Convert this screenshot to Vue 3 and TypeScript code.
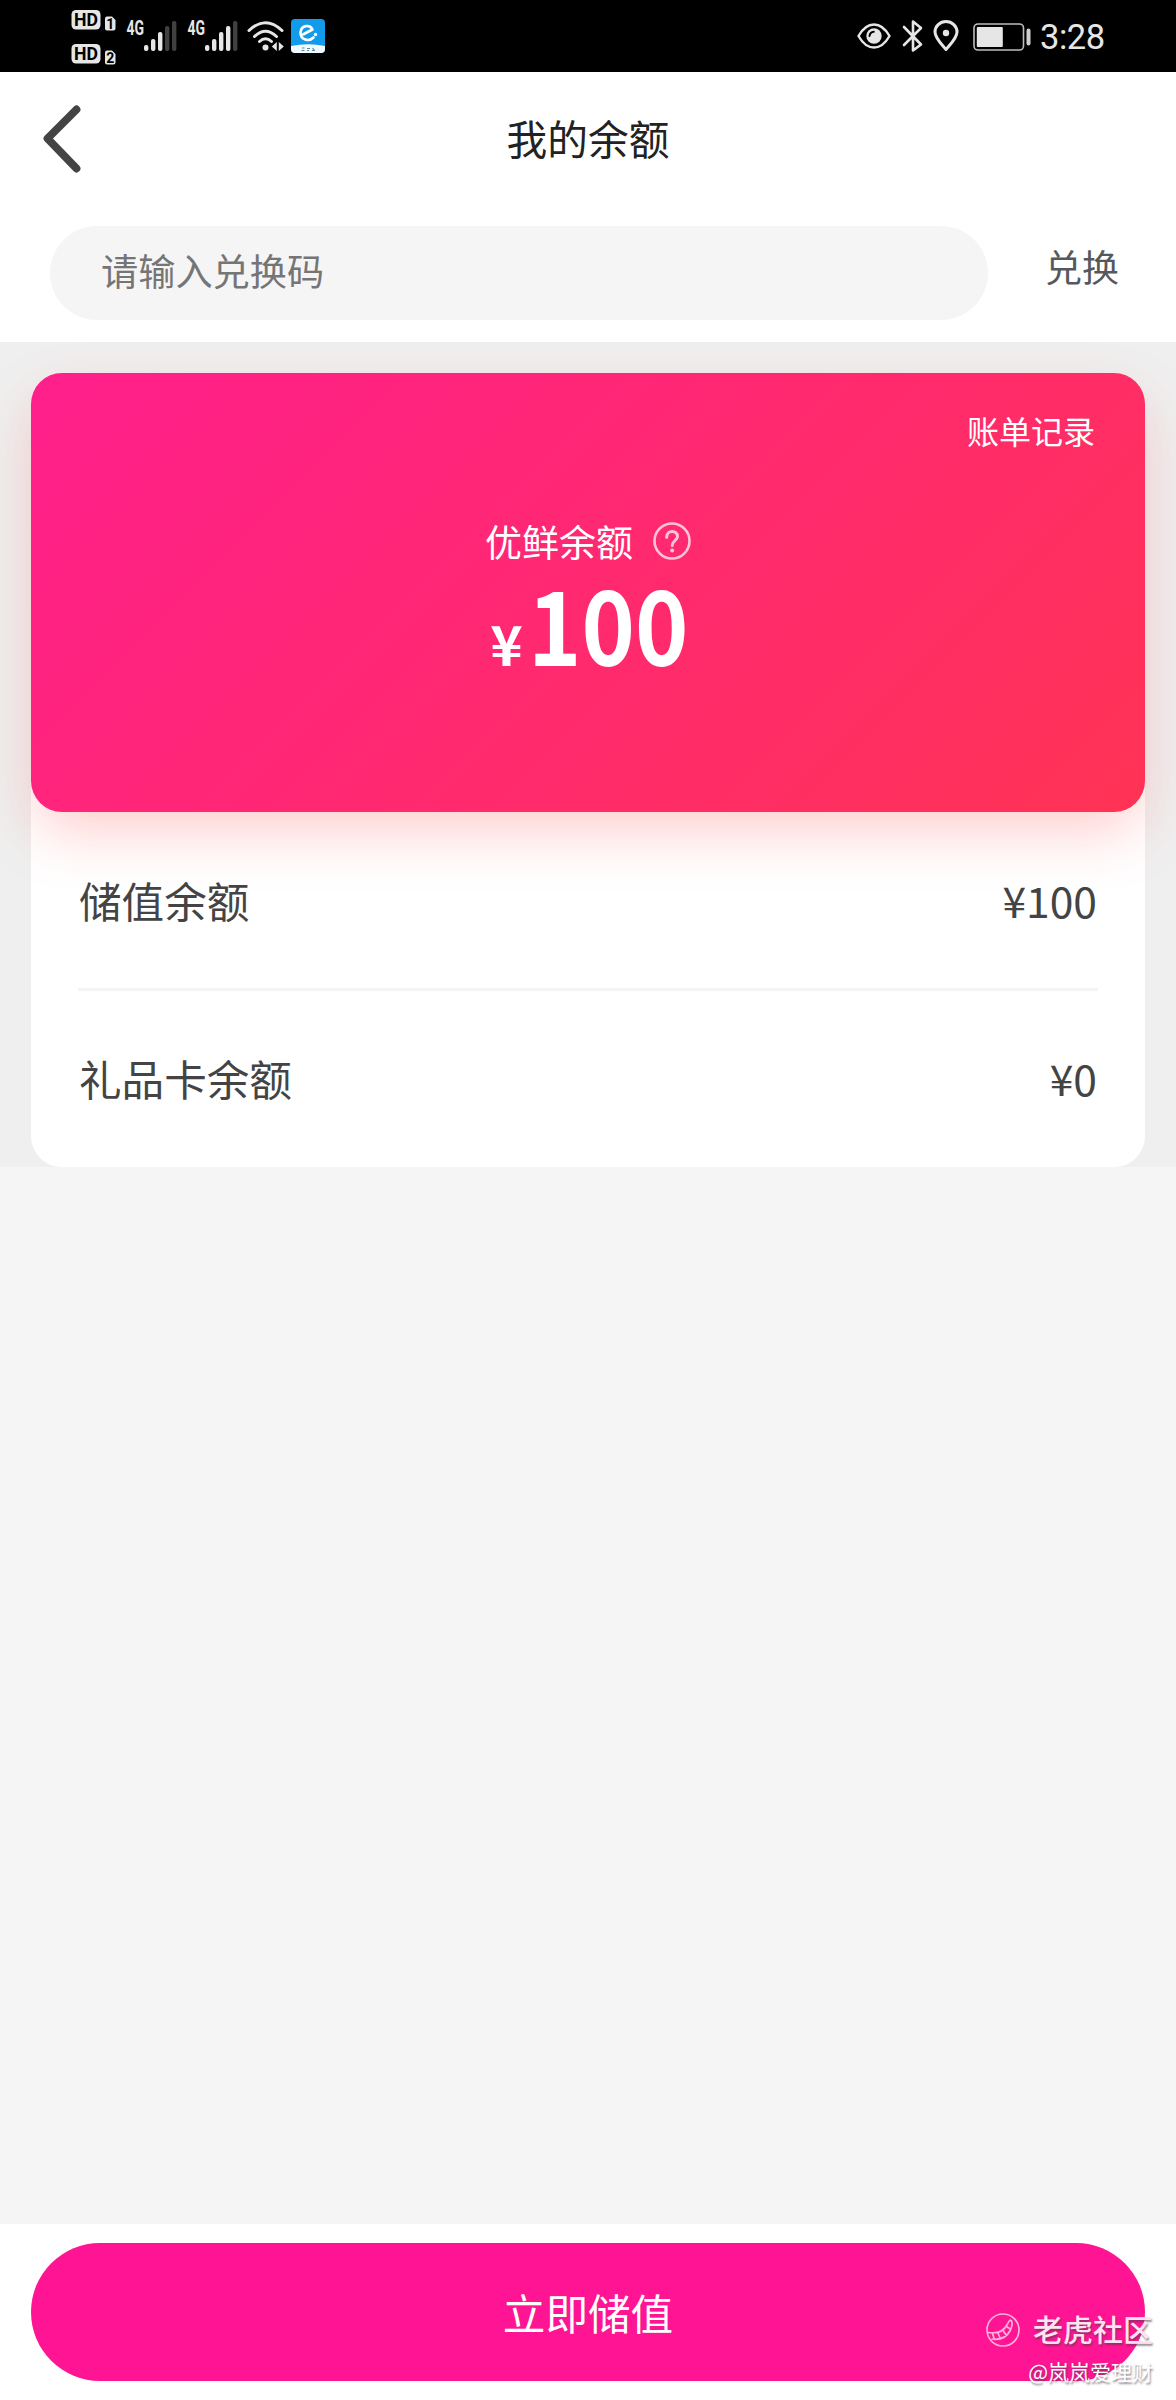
<script setup lang="ts">
import { ref } from 'vue'

interface BalanceRow {
  label: string
  amount: number
}

interface SignalBar {
  x: number
  y: number
}

const code = ref('')
const rows: BalanceRow[] = [
  { label: '储值余额', amount: 100 },
  { label: '礼品卡余额', amount: 0 },
]
const total = rows.reduce((sum, row) => sum + row.amount, 0)

const bars: SignalBar[] = [
  { x: 17, y: 25 },
  { x: 24, y: 19 },
  { x: 31, y: 12 },
  { x: 38, y: 6 },
  { x: 45, y: 1 },
]
const signals = [3, 4]
</script>

<template>
  <div class="page">
    <div class="status">
      <div class="status-left">
        <div class="hd-stack">
          <svg v-for="n in 2" :key="n" class="hd" width="45" height="22" viewBox="0 0 45 22">
            <rect x="0.500" y="0" width="29" height="19.500" rx="4.500" fill="#e6e6e6" />
            <text x="15" y="16.300" class="hd-text" text-anchor="middle" textLength="24" lengthAdjust="spacingAndGlyphs">HD</text>
            <path d="M34 8.500Q34 6.500 36 6.500H41L44.500 10V18.500Q44.500 20.500 42.500 20.500H36Q34 20.500 34 18.500Z" fill="#e6e6e6" />
            <text x="39.200" y="18.500" class="sim-text" text-anchor="middle">{{ n }}</text>
          </svg>
        </div>
        <svg v-for="lit in signals" :key="lit" class="signal" width="51" height="32" viewBox="0 0 51 32">
          <text x="-0.500" y="14.800" class="net-text" textLength="17.500" lengthAdjust="spacingAndGlyphs">4G</text>
          <rect
            v-for="(bar, i) in bars"
            :key="i"
            :x="bar.x"
            :y="bar.y"
            width="4.4"
            :height="31 - bar.y"
            rx="2"
            :fill="i < lit ? '#e6e6e6' : '#404040'"
          />
        </svg>
        <svg class="wifi" width="38" height="32" viewBox="0 0 38 32" fill="none" stroke="#e6e6e6" stroke-width="3" stroke-linecap="round">
          <path d="M2 10.500Q18.500-5 35 10.500" />
          <path d="M7.500 16.500Q18.500 6 29.500 16.500" />
          <path d="M12.500 21.500Q18.500 16 24.500 21.500" />
          <circle cx="18.500" cy="27.500" r="3" fill="#e6e6e6" stroke="none" />
          <path d="M29.800 22v9l-5-4.500zM31.800 31v-9l5 4.500z" fill="#e6e6e6" stroke="none" />
        </svg>
        <svg class="app" width="34" height="34" viewBox="0 0 34 34">
          <rect width="34" height="34" rx="4" fill="#129bea" />
          <path d="M0 27Q17 23.500 34 27V30Q34 34 30 34H4Q0 34 0 30Z" fill="#f1f9fc" />
          <path d="M12 15.500L21.500 10.500C19 5 10 6 9.500 13.500C9.300 21 18 23 22.500 18.500" fill="none" stroke="#fff" stroke-width="2.600" stroke-linecap="round" stroke-linejoin="round" />
          <circle cx="24.500" cy="15.500" r="1.700" fill="#fff" />
          <path d="M11 29l2.500 0M10.500 31.500h3M16 29.500l3 0M16 31.500h2M21.500 29l2 2.500M21 31.500h3" stroke="#5b8999" stroke-width="1.200" />
        </svg>
      </div>
      <div class="status-right">
        <svg width="34" height="28" viewBox="0 0 34 28">
          <path d="M1.500 14Q8 2.500 17 2.500T32.500 14Q26 25.500 17 25.500T1.500 14Z" fill="none" stroke="#e6e6e6" stroke-width="2.400" />
          <circle cx="17" cy="14" r="7.700" fill="#e6e6e6" />
          <path d="M12.500 14Q13 10 16.800 9.800" fill="none" stroke="#000" stroke-width="2" stroke-linecap="round" />
        </svg>
        <svg class="bt" width="22" height="34" viewBox="0 0 22 34">
          <path d="M2 8L19 25.500L11 31.500V2.500L19 9L2 26" fill="none" stroke="#e6e6e6" stroke-width="2.600" stroke-linejoin="round" stroke-linecap="round" />
        </svg>
        <svg class="pin" width="26" height="32" viewBox="0 0 26 32">
          <path d="M13 29.500C8 23.500 2 18 2 12A11 10.500 0 0 1 24 12C24 18 18 23.500 13 29.500Z" fill="none" stroke="#e6e6e6" stroke-width="3" stroke-linejoin="round" />
          <circle cx="13" cy="13" r="3.200" fill="#e6e6e6" />
        </svg>
        <svg class="battery" width="58" height="28" viewBox="0 0 58 28">
          <rect x="1" y="1" width="49.500" height="26" rx="4" fill="none" stroke="#bdbdbd" stroke-width="1.600" />
          <rect x="3.800" y="4" width="26" height="20" rx="1" fill="#e6e6e6" />
          <rect x="53.500" y="5.500" width="4" height="17" rx="2" fill="#cfcfcf" />
        </svg>
        <span class="time">3:28</span>
      </div>
    </div>

    <header class="nav">
      <svg class="back" width="44" height="72" viewBox="0 0 44 72">
        <path d="M36.500 6.500L7.500 35.500L36.500 65.500" fill="none" stroke="#444" stroke-width="7.800" stroke-linecap="round" stroke-linejoin="round" />
      </svg>
      <h1 class="title">我的余额</h1>
    </header>

    <div class="redeem">
      <input v-model="code" class="code" type="text" placeholder="请输入兑换码" />
      <span class="redeem-action">兑换</span>
    </div>

    <section class="wallet">
      <div class="card">
        <div class="bill">账单记录</div>
        <div class="card-label">
          <span>优鲜余额</span>
          <svg class="help" width="38" height="38" viewBox="0 0 38 38" fill="none" stroke="#ffc4dc" stroke-width="2.600">
            <circle cx="19" cy="19" r="17.500" />
            <path d="M13.700 15.200C13.700 7.500 24.500 7.800 24.500 14.500C24.500 18.500 19.200 18.500 19.200 23.500" stroke-width="3" stroke-linecap="round" />
            <circle cx="19.200" cy="28.500" r="2" fill="#ffc4dc" stroke="none" />
          </svg>
        </div>
        <div class="total"><span class="yen">¥</span><span class="sum">{{ total }}</span></div>
      </div>
      <div class="details">
        <div v-for="row in rows" :key="row.label" class="row">
          <span>{{ row.label }}</span>
          <span>¥{{ row.amount }}</span>
        </div>
      </div>
    </section>

    <footer class="footer">
      <button class="recharge">立即储值</button>
      <div class="watermark">
        <div class="brand">
          <svg width="36" height="36" viewBox="0 0 36 36" fill="none" stroke="#ffb3da" stroke-width="1.600">
            <circle cx="18" cy="18" r="16" />
            <path d="M3 20.500Q17 23 22.500 12Q25 6.500 26.500 9Q28 12 25.500 18Q20 29 6.500 27M7.500 21.500L9.500 27.500M13 21L15.500 27M18 18.500L21.500 23.500M21.500 14.500L26 17.500" stroke-width="1.700" />
          </svg>
          <span>老虎社区</span>
        </div>
        <div class="author">@岚岚爱理财</div>
      </div>
    </footer>
  </div>
</template>

<style>
body {
  margin: 0;
}
</style>

<style scoped>
.page {
  display: flex;
  flex-direction: column;
  width: 1176px;
  height: 2400px;
  overflow: hidden;
  background: #f5f5f5;
  font-family: "Noto Sans CJK SC", sans-serif;
  color: #444;
}
svg {
  display: block;
  flex: none;
  overflow: visible;
}
.status {
  display: flex;
  justify-content: space-between;
  height: 72px;
  padding: 0 72px 0 71px;
  box-sizing: border-box;
  background: #000;
}
.status-left {
  display: flex;
  align-items: flex-start;
}
.hd-stack {
  display: flex;
  flex-direction: column;
  gap: 12px;
  padding-top: 10px;
}
.hd-text {
  font: 700 18.500px Roboto, sans-serif;
}
.sim-text {
  font: 700 14px Roboto, sans-serif;
}
.net-text {
  font: 700 19.500px Roboto, sans-serif;
  fill: #e6e6e6;
}
.signal {
  margin: 20px 0 0 10px;
}
.hd-stack + .signal {
  margin-left: 11px;
}
.wifi {
  margin: 20px 0 0 8px;
}
.app {
  margin: 19px 0 0 6px;
}
.status-right {
  display: flex;
  align-items: center;
}
.bt {
  margin-left: 11px;
}
.pin {
  margin-left: 9px;
}
.battery {
  margin: 1px 9px 0 14px;
}
.time {
  width: 64px;
  font: 400 34.500px/72px Roboto, sans-serif;
  letter-spacing: -0.5px;
  padding-top: 2px;
  color: #e6e6e6;
}
.nav {
  display: grid;
  grid-template-columns: 88px 1fr 88px;
  align-items: center;
  height: 134px;
  background: #fff;
}
.back {
  margin-left: 40px;
}
.title {
  margin: 0;
  padding-bottom: 4px;
  text-align: center;
  font-size: 40.700px;
  font-weight: 400;
  color: #222;
}
.redeem {
  display: flex;
  align-items: flex-start;
  height: 136px;
  padding: 20px 0 0 50px;
  box-sizing: border-box;
  background: #fff;
}
.code {
  width: 938px;
  height: 94px;
  box-sizing: border-box;
  padding: 0 51px 6px;
  border: 0;
  border-radius: 47px;
  background: #f5f5f5;
  font: 400 37.200px "Noto Sans CJK SC", sans-serif;
  color: #444;
}
.code::placeholder {
  color: #757575;
  opacity: 1;
}
.redeem-action {
  margin-left: 57px;
  font-size: 37px;
  line-height: 80px;
  color: #55585c;
}
.wallet {
  padding: 31px 31px 0;
  background: #efefef;
}
.card {
  position: relative;
  height: 439px;
  box-sizing: border-box;
  padding: 34px 50px 0;
  border-radius: 31px;
  background: linear-gradient(135deg, #ff1f8c, #ff3355);
  box-shadow: 0 24px 58px -6px rgba(255, 51, 51, 0.25);
  color: #fff;
}
.bill {
  height: 46px;
  line-height: 46px;
  text-align: right;
  font-size: 32px;
}
.card-label {
  display: flex;
  align-items: center;
  justify-content: center;
  gap: 20px;
  margin-top: 61px;
  height: 54px;
  font-size: 37px;
}
.total {
  display: flex;
  align-items: baseline;
  justify-content: center;
  height: 110px;
  padding-left: 2px;
  line-height: 108px;
  font-weight: 700;
}
.yen {
  font-size: 55px;
}
.sum {
  width: 160px;
  margin-left: 5px;
  font-size: 103px;
  transform: scaleX(0.88);
  transform-origin: left;
}
.details {
  margin-top: -31px;
  padding: 31px 47px 0;
  border-radius: 0 0 31px 31px;
  background: #fff;
}
.row {
  display: flex;
  align-items: center;
  justify-content: space-between;
  height: 176px;
  padding: 0 1px 2px;
  box-sizing: border-box;
  font-size: 42.600px;
}
.row + .row {
  height: 179px;
  padding-bottom: 3px;
  border-top: 3px solid #f4f4f4;
}
.footer {
  position: relative;
  height: 176px;
  margin-top: auto;
  padding: 19px 31px 0;
  box-sizing: border-box;
  background: #fff;
}
.recharge {
  display: block;
  width: 100%;
  height: 138px;
  padding: 0 0 2px;
  border: 0;
  border-radius: 69px;
  background: #ff1493;
  font: 400 42.600px "Noto Sans CJK SC", sans-serif;
  color: #fff;
}
.watermark {
  position: absolute;
  right: 23px;
  bottom: 14px;
  color: #ffe2f1;
  text-shadow: 1px 2px 2px rgba(80, 60, 75, 0.6);
}
.brand {
  display: flex;
  align-items: center;
  justify-content: flex-end;
  gap: 12px;
  height: 36px;
  font-size: 30px;
  font-weight: 500;
}
.brand svg {
  margin-top: 3px;
}
.author {
  margin-top: 10px;
  height: 30px;
  line-height: 30px;
  text-align: right;
  font-size: 21px;
  color: #fff;
}
</style>
